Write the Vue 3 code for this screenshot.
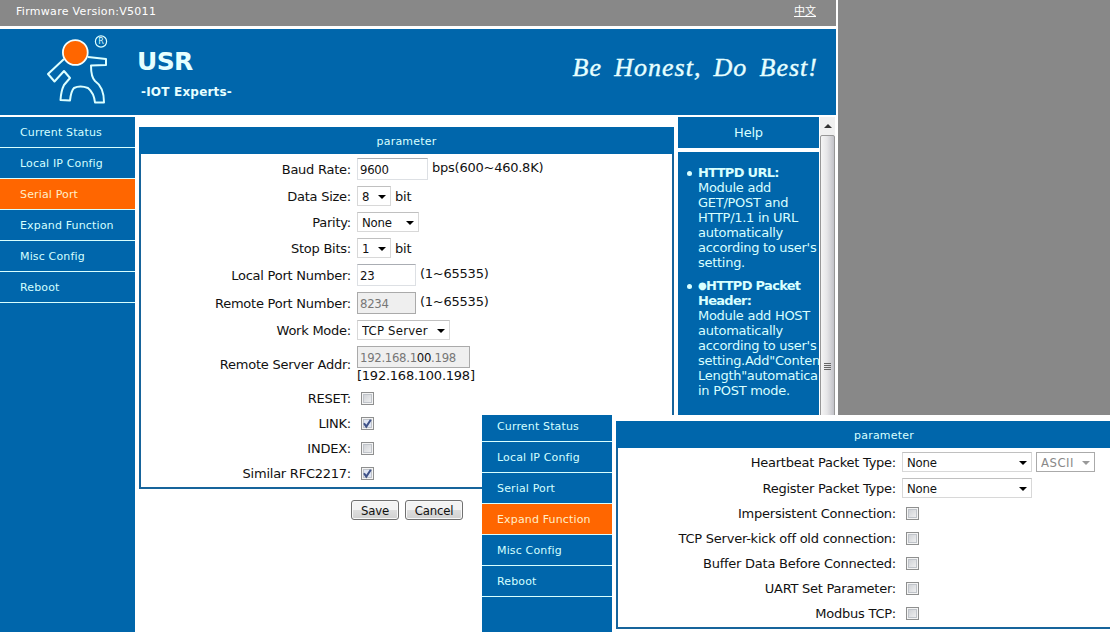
<script setup>
  import { reactive } from 'vue'

  const menu = ['Current Status', 'Local IP Config', 'Serial Port', 'Expand Function', 'Misc Config', 'Reboot']

  const serial = reactive({
    baudRate: '9600',
    dataSize: '8',
    parity: 'None',
    stopBits: '1',
    localPort: '23',
    remotePort: '8234',
    workMode: 'TCP Server'
  })

  const flags = reactive([
    { label: 'RESET:', on: false },
    { label: 'LINK:', on: true },
    { label: 'INDEX:', on: false },
    { label: 'Similar RFC2217:', on: true }
  ])

  const packets = reactive({
    heartbeat: 'None',
    format: 'ASCII',
    register: 'None'
  })

  const options = reactive([
    { label: 'Impersistent Connection:', on: false },
    { label: 'TCP Server-kick off old connection:', on: false },
    { label: 'Buffer Data Before Connected:', on: false },
    { label: 'UART Set Parameter:', on: false },
    { label: 'Modbus TCP:', on: false }
  ])
</script>

<template>
  <div class="screen">
    <div class="page">
      <div class="topbar">
        <span>Firmware Version:V5011</span>
        <a class="lang">中文</a>
      </div>

      <header class="banner">
        <svg class="logo" width="70" height="76" viewBox="0 0 70 76">
          <g fill="none" stroke="#dcffff" stroke-width="2" stroke-linejoin="round">
            <path d="M19 26 L3 41 L9.5 48.5 L19 38 L25 45 L19 52 Q16 58 15.5 67 L25 67.5 Q26 58 29 55 Q35 52 43 55 Q49 60 50 69.5 L59 69.5 Q59 54 50 48 Q46 44 46 32.5 L61 32 L61 26 L43 24" />
            <circle cx="56" cy="8.5" r="5.6" stroke-width="1.2" />
          </g>
          <circle cx="30.3" cy="19.5" r="12.4" fill="#ff6600" stroke="#f4ffff" stroke-width="1.8" />
          <text x="56" y="11.3" text-anchor="middle" font-size="8" fill="#dcffff">R</text>
        </svg>
        <div class="brand">
          <h1>USR</h1>
          <p>-IOT Experts-</p>
        </div>
        <div class="slogan">Be Honest, Do Best!</div>
      </header>

      <div class="main">
        <nav class="menu">
          <a v-for="item in menu" :key="item" :class="{ active: item === 'Serial Port' }">{{ item }}</a>
        </nav>

        <div class="content">
          <section class="panel">
            <h2>parameter</h2>
            <div class="rows">
              <div class="row text">
                <label>Baud Rate:</label>
                <input class="field wide" type="text" v-model="serial.baudRate"><span class="hint">bps(600~460.8K)</span>
              </div>
              <div class="row">
                <label>Data Size:</label>
                <span class="select small"><select v-model="serial.dataSize"><option>8</option></select></span><span class="unit">bit</span>
              </div>
              <div class="row">
                <label>Parity:</label>
                <span class="select medium"><select v-model="serial.parity"><option>None</option></select></span>
              </div>
              <div class="row">
                <label>Stop Bits:</label>
                <span class="select small"><select v-model="serial.stopBits"><option>1</option></select></span><span class="unit">bit</span>
              </div>
              <div class="row text">
                <label>Local Port Number:</label>
                <input class="field" type="text" v-model="serial.localPort"><span class="hint">(1~65535)</span>
              </div>
              <div class="row text">
                <label>Remote Port Number:</label>
                <input class="field" type="text" disabled v-model="serial.remotePort"><span class="hint">(1~65535)</span>
              </div>
              <div class="row">
                <label>Work Mode:</label>
                <span class="select mode"><select v-model="serial.workMode"><option>TCP Server</option></select></span>
              </div>
              <div class="row address">
                <label>Remote Server Addr:</label>
                <div>
                  <div class="field off">192.168.1<b>00</b>.198</div>
                  <div class="resolved">[192.168.100.198]</div>
                </div>
              </div>
              <div v-for="flag in flags" :key="flag.label" class="row check">
                <label>{{ flag.label }}</label>
                <span class="box" :class="{ on: flag.on }" @click="flag.on = !flag.on">
                  <svg v-if="flag.on" width="11" height="11" viewBox="0 0 11 11"><path d="M2 5.2 L4.3 8.6 L8.8 1.8" /></svg>
                </span>
              </div>
            </div>
          </section>
          <div class="buttons">
            <button class="save">Save</button>
            <button class="cancel">Cancel</button>
          </div>
        </div>

        <aside class="help">
          <h2>Help</h2>
          <ul>
            <li><strong>HTTPD URL:</strong><br>Module add<br>GET/POST and<br>HTTP/1.1 in URL<br>automatically<br>according to user's<br>setting.</li>
            <li><strong><span class="dot">●</span>HTTPD Packet<br>Header:</strong><br>Module add HOST<br>automatically<br>according to user's<br>setting.Add"Conten<br>Length"automatica<br>in POST mode.</li>
          </ul>
        </aside>

        <div class="scrollbar">
          <i class="up"></i>
          <div class="thumb">
            <svg width="7" height="8" viewBox="0 0 7 8"><path d="M0 .5H7M0 2.5H7M0 4.5H7M0 6.5H7" /></svg>
          </div>
        </div>
      </div>
    </div>

    <!-- second window, over the lower right corner -->
    <div class="window">
      <nav class="menu">
        <a v-for="item in menu" :key="item" :class="{ active: item === 'Expand Function' }">{{ item }}</a>
      </nav>
      <section class="panel">
        <h2>parameter</h2>
        <div class="rows">
          <div class="row">
            <label>Heartbeat Packet Type:</label>
            <span class="select large"><select v-model="packets.heartbeat"><option>None</option></select></span>
            <span class="select format"><select disabled v-model="packets.format"><option>ASCII</option></select></span>
          </div>
          <div class="row">
            <label>Register Packet Type:</label>
            <span class="select large"><select v-model="packets.register"><option>None</option></select></span>
          </div>
          <div v-for="option in options" :key="option.label" class="row check">
            <label>{{ option.label }}</label>
            <span class="box" @click="option.on = !option.on">
              <svg v-if="option.on" width="11" height="11" viewBox="0 0 11 11"><path d="M2 5.2 L4.3 8.6 L8.8 1.8" /></svg>
            </span>
          </div>
        </div>
      </section>
    </div>
  </div>
</template>

<style>
  body {
    margin: 0;
    overflow: hidden;
  }
</style>

<style scoped>
  * {
    box-sizing: border-box;
  }
  .screen {
    position: relative;
    width: 1110px;
    height: 632px;
    overflow: hidden;
    background: #888;
    font-family: Verdana, "DejaVu Sans", "Noto Sans CJK SC", sans-serif;
    font-size: 13px;
    color: #111;
    white-space: nowrap;
  }
  h1, h2, p, ul {
    margin: 0;
    padding: 0;
  }
  .page {
    width: 838px;
    height: 632px;
    border-right: 2px solid #fff;
    background: #fff;
  }
  .topbar {
    display: flex;
    justify-content: space-between;
    height: 26px;
    padding: 0 20px 0 16px;
    line-height: 23px;
    font-size: 11px;
    letter-spacing: .3px;
    background: #888;
    color: #fff;
  }
  .lang {
    letter-spacing: 0;
    text-decoration: underline;
  }
  .banner {
    display: flex;
    height: 86px;
    margin: 3px 0 2px;
    background: #0066ab;
    color: #e6ffff;
  }
  .logo {
    margin: 4px 0 0 45px;
  }
  .brand {
    padding: 18px 0 0 22px;
  }
  h1 {
    font-size: 25px;
    line-height: 30px;
    letter-spacing: -.6px;
  }
  .brand p {
    margin: 7px 0 0 4px;
    font-size: 12px;
    line-height: 16px;
    letter-spacing: .2px;
    font-weight: bold;
  }
  .slogan {
    margin: 21px 18px 0 auto;
    font: italic 26px/36px "Liberation Serif", serif;
    letter-spacing: 1px;
    word-spacing: 4.7px;
    -webkit-text-stroke: .4px #e6ffff;
  }
  .main {
    display: flex;
    height: 515px;
  }
  .menu {
    flex: none;
    width: 135px;
    background: #0066ab;
  }
  .menu a {
    display: block;
    height: 31px;
    padding-left: 20px;
    border-bottom: 1px solid #d8ffff;
    line-height: 32px;
    font-size: 11px;
    letter-spacing: .15px;
    color: #d4ffff;
  }
  .menu a.active {
    background: #ff6600;
    color: #ffeec8;
  }
  .content {
    width: 535px;
    margin: 10px 4px 0;
  }
  .panel {
    height: 362px;
    border: 2px solid #17649b;
    border-top: 0;
    background: #fff;
  }
  .panel h2 {
    height: 27px;
    margin: 0 -2px;
    line-height: 30px;
    font-size: 11px;
    letter-spacing: .2px;
    font-weight: normal;
    text-align: center;
    background: #0066ab;
    color: #d8ffff;
  }
  .rows {
    padding-top: 1px;
  }
  .row {
    display: flex;
    align-items: center;
    height: 26px;
    letter-spacing: -.24px;
  }
  .row label {
    flex: none;
    width: 210px;
    margin-right: 6px;
    text-align: right;
  }
  .row.text {
    height: 28px;
  }
  .row.check {
    height: 25px;
  }
  .row.address {
    height: 43px;
  }
  .field {
    width: 59px;
    height: 22px;
    padding: 1px 2px 0;
    border: 1px solid #dde0e4;
    border-top-color: #aaadb3;
    background: #fff;
    font: 13px/20px "DejaVu Sans Condensed", "DejaVu Sans", sans-serif;
    letter-spacing: -.3px;
    color: #111;
  }
  .field.wide {
    width: 71px;
  }
  .field:disabled, .field.off {
    border-color: #aaa;
    background: #efefef;
    color: #777;
  }
  .field.off {
    width: 113px;
  }
  .field b {
    font-weight: normal;
    color: #111;
  }
  .hint {
    margin: -4px 0 0 4px;
  }
  .unit {
    margin-left: 4px;
  }
  .resolved {
    line-height: 15px;
  }
  .select {
    position: relative;
    height: 20px;
  }
  .select::after {
    content: "";
    position: absolute;
    right: 5px;
    top: 9px;
    border: 4px solid transparent;
    border-top-color: #000;
    border-bottom: 0;
  }
  .select select {
    appearance: none;
    display: block;
    width: 100%;
    height: 20px;
    padding: 0 0 0 4px;
    border: 1px solid #d8d8d8;
    border-top-color: #c0c0c0;
    border-radius: 0;
    background: #fff;
    color: #111;
    font: 13px "DejaVu Sans Condensed", "DejaVu Sans", sans-serif;
    letter-spacing: -.2px;
  }
  .select.small {
    width: 34px;
  }
  .select.medium {
    width: 62px;
  }
  .select.mode {
    width: 93px;
  }
  .select.mode select {
    letter-spacing: .2px;
  }
  .select.large {
    width: 130px;
  }
  .select.format {
    width: 59px;
    margin-left: 4px;
  }
  .select select:disabled {
    border-color: #aaa;
    color: #888;
    opacity: 1;
    letter-spacing: .5px;
  }
  .select.format::after {
    border-top-color: #999;
  }
  .box {
    display: block;
    width: 13px;
    height: 13px;
    margin-left: 4px;
    border: 1px solid #8e8f8f;
    background: linear-gradient(135deg, #c8cbd0, #f6f6f6);
    box-shadow: inset 0 0 0 1px #f4f4f4, inset 0 0 0 2px #c0c4ca;
  }
  .box.on {
    background: #dfe5f4;
  }
  .box svg {
    display: block;
    fill: none;
    stroke: #3f5288;
    stroke-width: 2;
  }
  .buttons {
    display: flex;
    gap: 6px;
    margin: 11px 0 0 212px;
  }
  button {
    height: 20px;
    padding: 0;
    border: 1px solid #707070;
    border-radius: 3px;
    background: linear-gradient(#f3f3f3 48%, #dedede 52%, #d0d0d0);
    box-shadow: inset 0 0 0 1px #f8f8f8;
    font: 13px "DejaVu Sans Condensed", "DejaVu Sans", sans-serif;
    letter-spacing: -.2px;
    color: #111;
  }
  .save {
    width: 48px;
  }
  .cancel {
    width: 58px;
  }
  .help {
    width: 141px;
    color: #d8ffff;
  }
  .help h2 {
    height: 31px;
    line-height: 31px;
    font-size: 13px;
    font-weight: normal;
    letter-spacing: -.2px;
    text-align: center;
    background: #0066ab;
  }
  .help ul {
    height: 480px;
    margin-top: 4px;
    padding: 13px 0 0 20px;
    overflow: hidden;
    list-style: none;
    line-height: 15px;
    background: #0066ab;
  }
  .help li {
    position: relative;
    margin-bottom: 8px;
    letter-spacing: -.28px;
  }
  .help strong {
    letter-spacing: -.7px;
  }
  .dot {
    font-size: 10px;
    line-height: 1;
    vertical-align: 1px;
  }
  .help li::before {
    content: "";
    position: absolute;
    left: -11px;
    top: 6px;
    width: 5px;
    height: 5px;
    border-radius: 50%;
    background: #d8ffff;
  }
  .scrollbar {
    width: 15px;
    margin-left: 1px;
    background: #f0f0f0;
  }
  .up {
    display: block;
    height: 18px;
    padding-top: 7px;
  }
  .up::before {
    content: "";
    display: block;
    width: 0;
    margin: 0 auto;
    border: 4px solid transparent;
    border-bottom-color: #333;
    border-top: 0;
  }
  .thumb {
    height: 480px;
    padding: 227px 0 0 3px;
    border: 1px solid #979797;
    border-radius: 2px;
    background: linear-gradient(90deg, #f5f5f5, #e6e6e8 45%, #c2c2c8);
  }
  .thumb svg {
    display: block;
    stroke: #666;
  }
  .window {
    position: absolute;
    left: 482px;
    top: 415px;
    display: flex;
    width: 628px;
    height: 217px;
    overflow: hidden;
    background: #fff;
  }
  .window .menu {
    width: 130px;
  }
  .window .menu a {
    padding-left: 15px;
  }
  .window .menu a:first-child {
    height: 27px;
    line-height: 24px;
  }
  .window .panel {
    flex: none;
    width: 536px;
    height: 208px;
    margin: 6px 0 0 4px;
  }
  .window .row label {
    width: 278px;
  }
</style>
